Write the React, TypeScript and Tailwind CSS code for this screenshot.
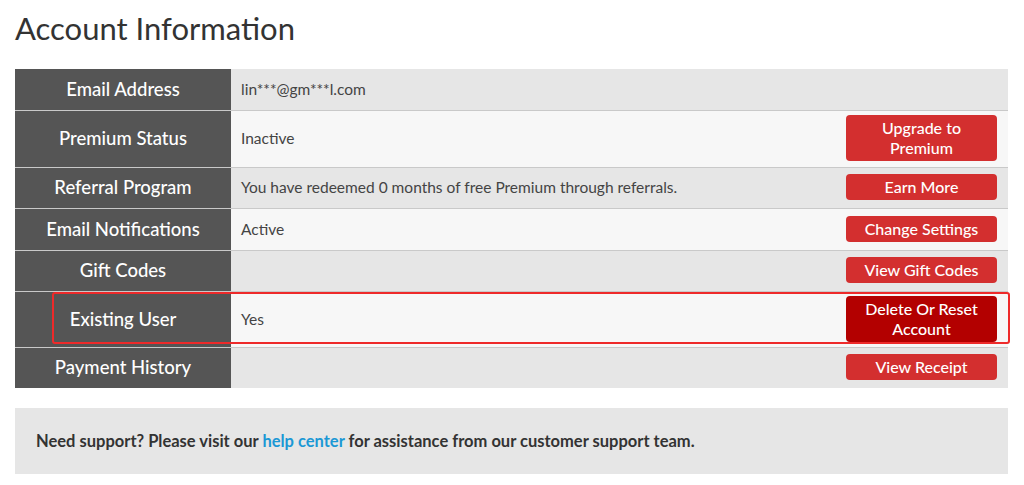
const rows = [
	{ label: "Email Address", value: "lin***@gm***l.com", h: "h-[41px]", bg: "bg-[#e6e6e6]" },
	{ label: "Premium Status", value: "Inactive", h: "h-[57px]", bg: "bg-[#f7f7f7]", button: "Upgrade to Premium", tall: true },
	{ label: "Referral Program", value: "You have redeemed 0 months of free Premium through referrals.", h: "h-[41px]", bg: "bg-[#e6e6e6]", button: "Earn More" },
	{ label: "Email Notifications", value: "Active", h: "h-[42px]", bg: "bg-[#f7f7f7]", button: "Change Settings" },
	{ label: "Gift Codes", value: "", h: "h-[41px]", bg: "bg-[#e6e6e6]", button: "View Gift Codes" },
	{ label: "Existing User", value: "Yes", h: "h-[56px]", bg: "bg-[#f7f7f7]", button: "Delete Or Reset Account", tall: true, dark: true },
	{ label: "Payment History", value: "", h: "h-[41px]", bg: "bg-[#e6e6e6]", button: "View Receipt" },
];

const App = () => {
	return (
		<div className="min-h-[485px] w-full bg-white px-[15px] pt-[8px] font-['Lato',sans-serif]">
			<h1 className="text-[31px] leading-[40px] text-[#333]">Account Information</h1>
			<div className="relative mt-[21px] w-[993px]">
				{rows.map((row, i) => (
					<div key={row.label} className={`flex ${row.h} ${i > 0 ? "border-t border-[#c9c9c9]" : ""}`}>
						<div className="flex w-[216px] shrink-0 items-center justify-center bg-[#555] text-[18.5px] font-medium text-white">
							{row.label}
						</div>
						<div className={`flex flex-1 items-center justify-between pl-[10px] pr-[11px] text-[15.5px] text-[#444] ${row.bg}`}>
							<span>{row.value}</span>
							{row.button && (
								<button
									className={`w-[151px] rounded-[4px] text-[16px] font-medium leading-[20px] text-white ${row.tall ? "-mt-[2px] h-[46px] px-[12px]" : "-mt-[2px] h-[26px]"} ${row.dark ? "bg-[#b30000]" : "bg-[#d32f2f]"}`}
								>
									{row.button}
								</button>
							)}
						</div>
					</div>
				))}
				{/* highlight box drawn over the "Existing User" row */}
				<div className="pointer-events-none absolute left-[37px] top-[223px] h-[52px] w-[958px] rounded-[3px] border-[2.5px] border-[#ee2a2a]" />
			</div>
			<div className="mt-[20px] flex h-[66px] w-[993px] items-center bg-[#e6e6e6] px-[21px] text-[16.5px] font-bold text-[#333]">
				<p>
					Need support? Please visit our <span className="text-[#1b98d5]">help center</span> for assistance from our customer support team.
				</p>
			</div>
		</div>
	);
};

export default App;
